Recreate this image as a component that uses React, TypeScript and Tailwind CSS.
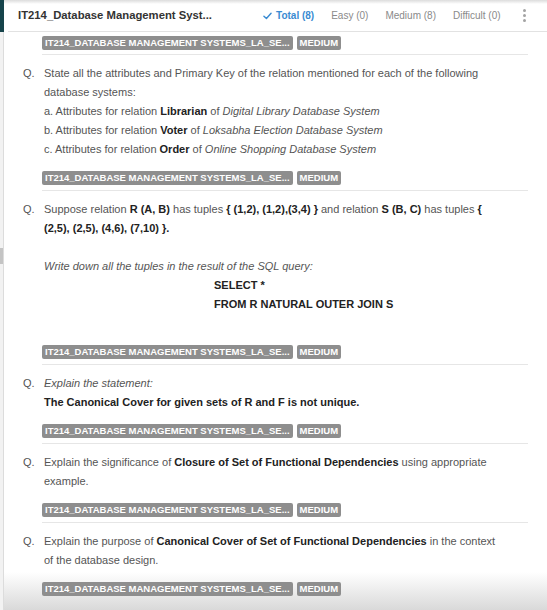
import React from "react";

const SUBJECT = "IT214_DATABASE MANAGEMENT SYSTEMS_LA_SE...";

function Tags({ className = "" }: { className?: string }) {
  return (
    <div className={`flex items-center gap-[4px] ${className}`}>
      <span className="h-[14px] px-[3px] rounded-[2px] bg-[#8e8e8e] text-white font-bold text-[9.5px] leading-[14px] whitespace-nowrap">
        {SUBJECT}
      </span>
      <span className="h-[14px] px-[3px] rounded-[2px] bg-[#8e8e8e] text-white font-bold text-[9.5px] leading-[14px]">
        MEDIUM
      </span>
    </div>
  );
}

function Question({ children, last = false }: { children: React.ReactNode; last?: boolean }) {
  return (
    <section className={`ml-[38px] mr-[19px] pt-[9px] pb-[5px] ${last ? "" : "border-b border-[#e6e6e6]"}`}>
      <div className="flex -ml-[19px] text-[11px] leading-[19px] text-[#555]">
        <span className="w-[21px] shrink-0">Q.</span>
        <div className="flex-1 pr-[22px]">{children}</div>
      </div>
      <Tags className="mt-[12px]" />
    </section>
  );
}

function Filter({ label, active = false }: { label: string; active?: boolean }) {
  return (
    <span className={`flex items-center gap-[4px] text-[10px] ${active ? "text-[#3a8bd2] font-semibold" : "text-[#8a8a8a]"}`}>
      {active && (
        <svg width="9" height="8" viewBox="0 0 10 9" fill="none">
          <path d="M1 4.8 L3.8 7.4 L9 1.4" stroke="#3a8bd2" strokeWidth="1.6" strokeLinecap="round" strokeLinejoin="round" />
        </svg>
      )}
      {label}
    </span>
  );
}

export default function App() {
  const b = "font-bold text-[#222]";
  return (
    <div className="relative w-[547px] h-[610px] overflow-hidden bg-white" style={{ fontFamily: '"Liberation Sans", Arial, sans-serif' }}>
      {/* bottom shadow sits behind the list */}
      <div className="pointer-events-none absolute left-0 right-0 bottom-0 h-[38px] bg-gradient-to-b from-transparent to-[#d9d9d9]" />
      <div className="pointer-events-none absolute left-0 right-0 top-0 h-[4px] bg-gradient-to-b from-[#dcdcdc] to-transparent" />

      <div className="relative z-10 flex h-full">
        {/* left edge strip */}
        <div className="w-[4px] shrink-0 flex flex-col">
          <div className="h-[32px] bg-[#16444b]" />
          <div className="flex-1 bg-[#f2f2f2] border-r border-[#dcdcdc] flex flex-col">
            <div className="h-[216px]" />
            <div className="h-[16px] bg-[#c4c4c4]" />
          </div>
        </div>

        <div className="flex-1 flex flex-col">
          <header className="h-[32px] ml-[4px] flex items-center border-b border-[#e2e2e2]">
            <h1 className="pl-[10px] text-[11.3px] font-bold text-[#333]">IT214_Database Management Syst...</h1>
            <nav className="ml-[51px] flex items-center gap-[17px]">
              <Filter label="Total (8)" active />
              <Filter label="Easy (0)" />
              <Filter label="Medium (8)" />
              <Filter label="Difficult (0)" />
            </nav>
            <div className="ml-[22px] flex flex-col gap-[2px]">
              <span className="w-[3px] h-[3px] rounded-full bg-[#a3a3a3]" />
              <span className="w-[3px] h-[3px] rounded-full bg-[#a3a3a3]" />
              <span className="w-[3px] h-[3px] rounded-full bg-[#a3a3a3]" />
            </div>
          </header>

          <div className="ml-[38px] mr-[19px] pt-[4px] pb-[4px] border-b border-[#e6e6e6]">
            <Tags />
          </div>

          <Question>
            <p>State all the attributes and Primary Key of the relation mentioned for each of the following database systems:</p>
            <p>a. Attributes for relation <span className={b}>Librarian</span> of <i>Digital Library Database System</i></p>
            <p>b. Attributes for relation <span className={b}>Voter</span> of <i>Loksabha Election Database System</i></p>
            <p>c. Attributes for relation <span className={b}>Order</span> of <i>Online Shopping Database System</i></p>
          </Question>

          <Question>
            <p>
              Suppose relation <span className={b}>R (A, B)</span> has tuples <span className={b}>{"{ (1,2), (1,2),(3,4) }"}</span> and relation{" "}
              <span className={b}>S (B, C)</span> has tuples <span className={b}>{"{ (2,5), (2,5), (4,6), (7,10) }."}</span>
            </p>
            <div className="h-[19px]" />
            <p><i>Write down all the tuples in the result of the SQL query:</i></p>
            <p className={`pl-[170px] ${b}`}>SELECT *</p>
            <p className={`pl-[170px] ${b}`}>FROM R NATURAL OUTER JOIN S</p>
            <div className="h-[19px]" />
          </Question>

          <Question>
            <p><i>Explain the statement:</i></p>
            <p className={b}>The Canonical Cover for given sets of R and F is not unique.</p>
          </Question>

          <Question>
            <p>
              Explain the significance of <span className={b}>Closure of Set of Functional Dependencies</span> using appropriate example.
            </p>
          </Question>

          <Question last>
            <p>
              Explain the purpose of <span className={b}>Canonical Cover of Set of Functional Dependencies</span> in the context of the database design.
            </p>
          </Question>
        </div>
      </div>
    </div>
  );
}
